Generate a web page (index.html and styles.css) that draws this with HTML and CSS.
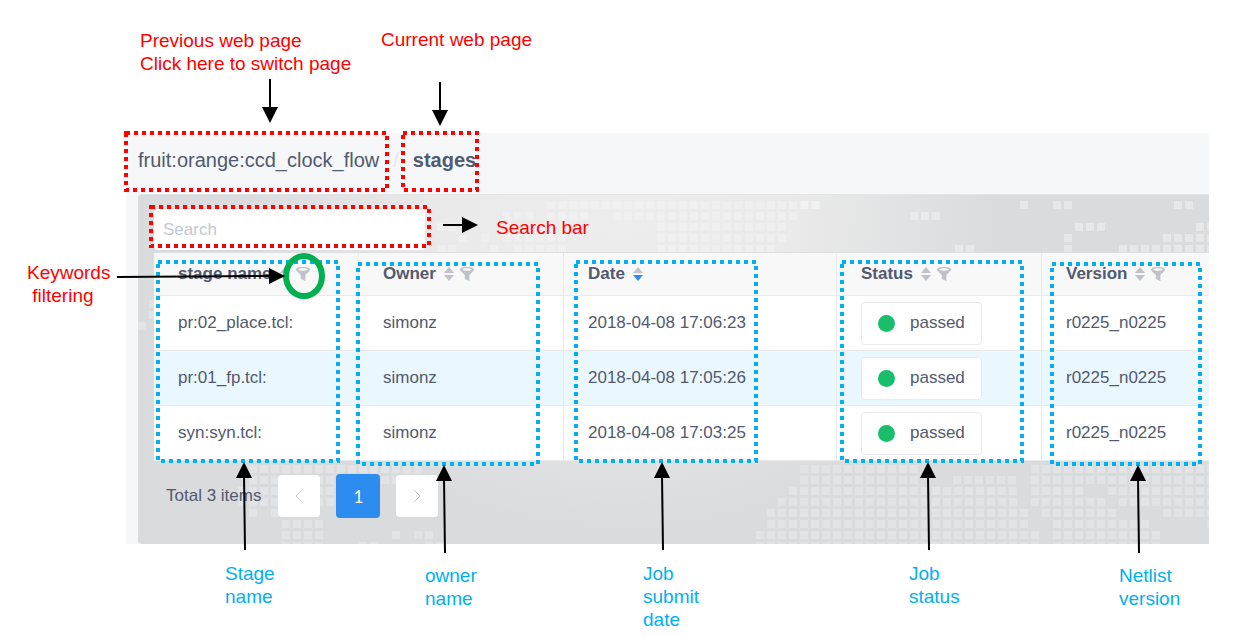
FILE: index.html
```html
<!DOCTYPE html>
<html lang="en">
<head>
<meta charset="utf-8">
<title>Stages</title>
<link rel="stylesheet" href="styles.css">
</head>
<body>
<svg class="symbols" aria-hidden="true">
  <symbol id="sort" viewBox="0 0 10 14"><path class="sort-up" d="M5 0L10 6H0Z"/><path class="sort-down" d="M0 8H10L5 14Z"/></symbol>
  <symbol id="funnel" viewBox="0 0 14 14"><path fill-rule="evenodd" d="M0 2.6C0 .9 3 0 7 0s7 .9 7 2.6c0 .8-.5 1.3-1.2 1.9L9.4 8v6L4.8 12V8L1.2 4.500C.5 3.900 0 3.400 0 2.600ZM2 2.500C3 3.400 5 3.700 7 3.700s4-.3 5-1.200C11 1.600 9 1.300 7 1.300S3 1.600 2 2.500Z"/></symbol>
</svg>
<main class="guide">
  <section class="app">
    <nav class="breadcrumb" aria-label="Breadcrumb">
      <a href="#">fruit:orange:ccd_clock_flow</a>
      <span class="slash">/</span>
      <strong>stages</strong>
    </nav>
    <div class="panel">
      <svg class="map" aria-hidden="true">
        <g transform="translate(-138 -194)">
          <path class="bright" d="M547 204h272M503 215h30M547 215h41M613 215h184M437 226h19M657 226h129M459 237h8M481 237h8M503 237h63M657 237h129M437 248h19M490 248h8M514 248h52M657 248h118"/>
          <path class="bright" d="M801 204h19M1020 204h8M1053 204h19M1174 204h19M910 215h30M1075 226h30M1196 226h30M1064 237h8M1163 237h63M955 248h19M1064 248h8M1119 248h107"/>
          <path d="M149 303h8M149 314h8M138 325h8"/>
          <path d="M249 468h173M249 479h96M381 479h19M238 490h107M238 501h107M249 512h8M271 512h8M282 523h41M282 534h41M392 534h8M414 534h19M282 545h41M359 545h19M425 545h19"/>
          <path d="M800 468h118M800 479h118M789 490h228M778 501h239M767 512h261M767 523h261M756 534h283M756 545h283"/>
          <path d="M1031 468h195M953 479h63M1031 479h195M1031 490h52M1108 490h118M1031 501h74M1119 501h107M1042 512h74M1163 512h63M1053 523h96M1207 523h19M1053 534h107M1053 545h107"/>
        </g>
      </svg>
      <div class="content">
        <input class="search" type="search" placeholder="Search" aria-label="Search">
        <table class="stages">
          <colgroup><col class="col"><col class="col"><col class="col-wide"><col class="col"><col></colgroup>
          <thead>
            <tr>
              <th scope="col"><div class="head">stage name<span class="tools"><svg class="sort"><use href="#sort"/></svg><svg class="funnel"><use href="#funnel"/></svg></span></div></th>
              <th scope="col"><div class="head">Owner<span class="tools"><svg class="sort"><use href="#sort"/></svg><svg class="funnel"><use href="#funnel"/></svg></span></div></th>
              <th scope="col"><div class="head">Date<span class="tools"><svg class="sort descending"><use href="#sort"/></svg></span></div></th>
              <th scope="col"><div class="head">Status<span class="tools"><svg class="sort"><use href="#sort"/></svg><svg class="funnel"><use href="#funnel"/></svg></span></div></th>
              <th scope="col"><div class="head">Version<span class="tools"><svg class="sort"><use href="#sort"/></svg><svg class="funnel"><use href="#funnel"/></svg></span></div></th>
            </tr>
          </thead>
          <tbody>
            <tr><td>pr:02_place.tcl:</td><td>simonz</td><td>2018-04-08 17:06:23</td><td><span class="tag"><i class="dot"></i>passed</span></td><td>r0225_n0225</td></tr>
            <tr class="active"><td>pr:01_fp.tcl:</td><td>simonz</td><td>2018-04-08 17:05:26</td><td><span class="tag"><i class="dot"></i>passed</span></td><td>r0225_n0225</td></tr>
            <tr><td>syn:syn.tcl:</td><td>simonz</td><td>2018-04-08 17:03:25</td><td><span class="tag"><i class="dot"></i>passed</span></td><td>r0225_n0225</td></tr>
          </tbody>
        </table>
        <div class="pager">
          <span class="total">Total 3 items</span>
          <button type="button" aria-label="Previous page"><svg width="8" height="14" viewBox="0 0 8 14"><path d="M7 1L1 7L7 13"/></svg></button>
          <button type="button" class="current">1</button>
          <button type="button" aria-label="Next page"><svg width="8" height="14" viewBox="0 0 8 14"><path d="M1 1L7 7L1 13"/></svg></button>
        </div>
      </div>
    </div>
  </section>

  <svg class="marks" aria-hidden="true">
    <g class="box red">
      <rect x="126" y="133" width="261" height="57"/>
      <rect x="403" y="133" width="74" height="57"/>
      <rect x="151" y="207" width="278" height="39"/>
    </g>
    <g class="box blue">
      <rect x="158" y="262" width="180" height="199"/>
      <rect x="358" y="264" width="180" height="200"/>
      <rect x="576" y="262" width="180" height="199"/>
      <rect x="842" y="262" width="180" height="199"/>
      <rect x="1052" y="264" width="148" height="200"/>
    </g>
    <ellipse class="ring" cx="304" cy="276" rx="18" ry="20"/>
    <path class="shaft" d="M270 79V110M440 82V112M443 225H465M117 277L273 276M245 550L244 475M445 553L444 478M663 550L662 475M929 550L928 475M1139 553L1138 478"/>
    <path d="M262 107h16l-8 16ZM432 110h16l-8 16ZM462 217v16l16-8ZM269 268v16l16-8ZM236 478h16l-8-16ZM436 481h16l-8-16ZM654 478h16l-8-16ZM920 478h16l-8-16ZM1130 481h16l-8-16Z"/>
  </svg>
  <p class="note red previous">Previous web page<br>Click here to switch page</p>
  <p class="note red here">Current web page</p>
  <p class="note red find">Search bar</p>
  <p class="note red filter">Keywords
 filtering</p>
  <p class="note blue stage">Stage<br>name</p>
  <p class="note blue owner">owner<br>name</p>
  <p class="note blue date">Job<br>submit<br>date</p>
  <p class="note blue status">Job<br>status</p>
  <p class="note blue version">Netlist<br>version</p>
</main>
</body>
</html>
```
FILE: styles.css
```css
* { box-sizing: border-box; }
body {
  margin: 0;
  background: #fff;
  color: #515a6e;
  font: 17px/24px "Liberation Sans", Arial, sans-serif;
}
.symbols { position: absolute; width: 0; height: 0; }
.guide { position: relative; min-height: 100vh; padding: 133px 26px 0 126px; }

.app { background: #f5f7f9; padding-left: 12px; overflow: hidden; }
.breadcrumb {
  display: flex;
  align-items: center;
  gap: 14px;
  height: 61px;
  padding-bottom: 8px;
  font-size: 20px;
}
.breadcrumb a { color: inherit; text-decoration: none; }
.slash { color: #e4e7ec; }

.panel {
  position: relative;
  overflow: hidden;
  border-top: 1px solid #e3e4e6;
  border-radius: 4px 0 0 4px;
  background: radial-gradient(ellipse 380px 320px at 45% 5%, #ededed, #eaeaea 45%, #dadbdd);
}
.map { position: absolute; left: 0; top: 0; width: 100%; height: 100%; }
.map path { fill: none; stroke: #e2e3e4; stroke-width: 8; stroke-dasharray: 8 3; }
.map .bright { stroke: #f3f3f3; stroke-opacity: .5; }
.content { position: relative; padding: 14px 0 26px 16px; }

.search {
  display: block;
  width: 271px;
  height: 41px;
  margin-bottom: 2px;
  padding: 0 9px;
  border: 0;
  border-radius: 4px;
  background: #fff;
  font: inherit;
  color: inherit;
}
.search::placeholder { color: #c5c8ce; opacity: 1; }

.stages {
  width: 100%;
  table-layout: fixed;
  border-spacing: 0;
  background: #fff;
  border-top: 1px solid #dcdee2;
}
.col { width: 205px; }
.col-wide { width: 273px; }
.stages th, .stages td {
  padding: 0 0 0 24px;
  border-right: 1px solid #e8eaec;
  border-bottom: 1px solid #e8eaec;
  text-align: left;
  white-space: nowrap;
}
.stages th:last-child, .stages td:last-child { border-right: 0; }
.stages th { height: 43px; background: #f8f8f9; }
.stages td { height: 55px; }
.stages .active td { background: #ebf7ff; }
.head { display: flex; align-items: center; gap: 8px; }
.tools { display: flex; gap: 6px; }
.tools svg { width: 14px; height: 14px; fill: #bfc2c8; }
.tools .sort { width: 10px; color: #bfc2c8; }
.tools .descending { color: #2d8cf0; }
.sort-down { fill: currentColor; }
.tag {
  display: flex;
  align-items: center;
  gap: 15px;
  width: 121px;
  height: 43px;
  padding-left: 16px;
  border: 1px solid #e8eaec;
  border-radius: 4px;
  background: #fff;
}
.dot { width: 17px; height: 17px; border-radius: 50%; background: #19be6b; }

.pager { display: flex; align-items: center; padding: 13px 0 0 12px; gap: 16px; }
.total { margin-right: 1px; }
.pager button {
  display: flex;
  align-items: center;
  justify-content: center;
  width: 42px;
  height: 42px;
  padding: 0;
  border: 0;
  border-radius: 4px;
  background: #fff;
}
.pager path { fill: none; stroke: #c5c8ce; stroke-width: 1; }
.pager .current {
  width: 44px;
  height: 44px;
  background: #2d8cf0;
  color: #fff;
  font: 17px Lato, sans-serif;
}

.marks { position: absolute; left: 0; top: 0; width: 100%; height: 100%; pointer-events: none; }
.box { fill: none; stroke: currentColor; stroke-width: 4; stroke-dasharray: 4 4; }
.red { color: #f00; }
.blue { color: #00b0f0; }
.ring { fill: none; stroke: #00b050; stroke-width: 6; }
.shaft { fill: none; stroke: #000; stroke-width: 2; }

.note { position: absolute; margin: 0; font-size: 19px; line-height: 23px; white-space: pre; }
.previous { left: 140px; top: 29px; }
.here { left: 381px; top: 28px; }
.find { left: 496px; top: 216px; }
.filter { left: 27px; top: 261px; }
.stage { left: 225px; top: 562px; }
.owner { left: 425px; top: 564px; }
.date { left: 643px; top: 562px; }
.status { left: 909px; top: 562px; }
.version { left: 1119px; top: 564px; }
```
